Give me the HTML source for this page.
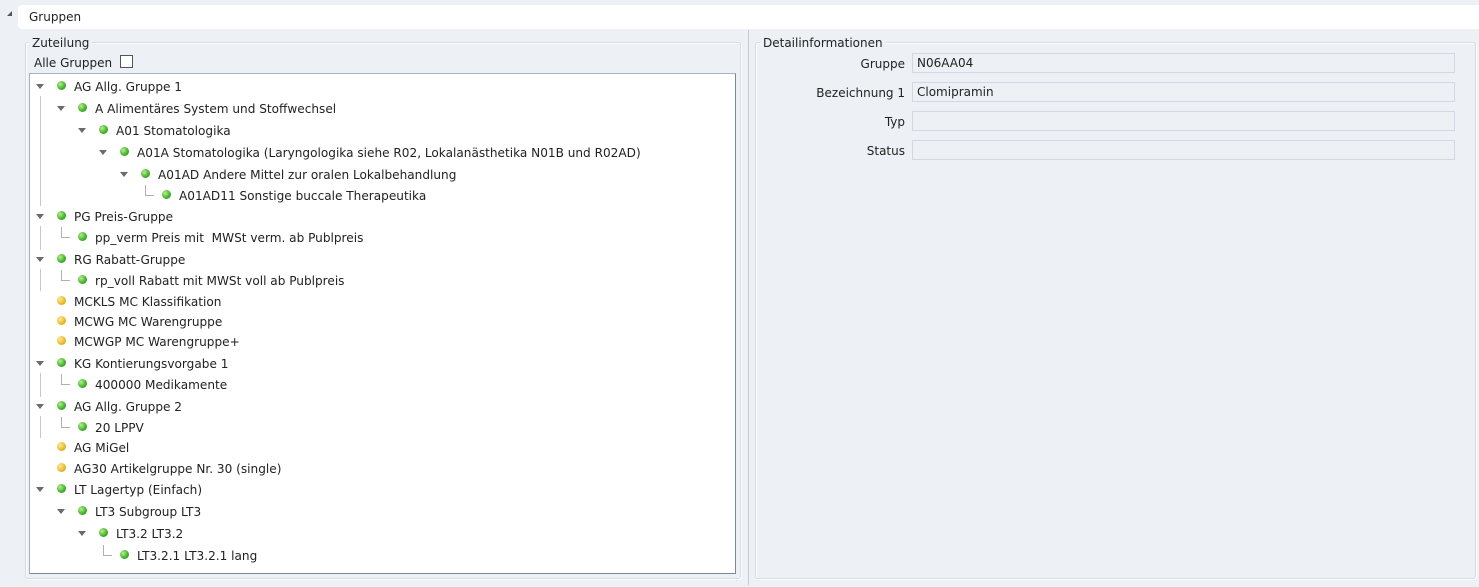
<!DOCTYPE html>
<html><head><meta charset="utf-8"><style>
*{box-sizing:border-box;margin:0;padding:0}
body{width:1479px;height:587px;background:#edf0f5;font-family:"DejaVu Sans","Liberation Sans",sans-serif;font-size:11.5px;color:#222;position:relative;overflow:hidden}
.abs{position:absolute}
.hdr{left:18px;top:5px;width:1461px;height:24px;background:#fff;border-radius:4px 0 0 4px}
.fs{border:1px solid #d5dbe4;box-shadow:inset 1px 1px 0 #fff,1px 1px 0 #fff;border-radius:3px}
.leg{background:#edf0f5;padding:0 3px;font-size:12px;line-height:14px}
.tree{left:29px;top:73px;width:707px;height:501px;background:#fff;border:1px solid #a9b3c1;border-right-color:#7c889a;border-bottom-color:#7c889a}
.r{position:absolute;white-space:nowrap;line-height:16px;font-size:12.1px;margin-top:1px}
.ar{position:absolute;width:0;height:0;border-left:4px solid transparent;border-right:4px solid transparent;border-top:5px solid #6b6b6b}
.d{position:absolute;width:9px;height:9px;border-radius:50%}
.g{background:radial-gradient(circle at 35% 35%,#b6f08a,#3fae2a 60%,#2e8a1c)}
.y{background:radial-gradient(circle at 35% 35%,#ffe9a0,#e8b923 60%,#c09010)}
.vl{position:absolute;width:1px;background:#c8c8c8}
.el{position:absolute;width:9px;height:11px;border-left:1px solid #b0b0b0;border-bottom:1px solid #b0b0b0}
.lab{position:absolute;font-size:12px;text-align:right;width:120px;line-height:16px;margin-top:1px}
.in{position:absolute;left:912px;width:543px;height:20px;background:#edf0f5;border:1px solid #cfd8e4;padding:2px 4px;font-size:12px;line-height:14px}
</style></head><body>
<div class="abs" style="left:7px;top:11px;width:0;height:0;border-left:5px solid transparent;border-bottom:5px solid #555"></div>
<div class="abs hdr"></div>
<div class="abs" style="left:29px;top:9px;font-size:12px;line-height:16px">Gruppen</div>

<div class="abs fs" style="left:25px;top:42px;width:716px;height:537px"></div>
<div class="abs leg" style="left:29px;top:36px">Zuteilung</div>
<div class="abs" style="left:34px;top:55px;font-size:12px;line-height:16px">Alle Gruppen</div>
<div class="abs" style="left:120px;top:55px;width:13px;height:13px;border:1px solid #555;background:#fff"></div>

<div class="abs" style="left:748px;top:30px;width:1px;height:555px;background:#c5cdd9"></div>

<div class="abs fs" style="left:755px;top:42px;width:721px;height:537px"></div>
<div class="abs leg" style="left:760px;top:36px">Detailinformationen</div>
<div class="lab" style="left:785px;top:55px">Gruppe</div>
<div class="in" style="top:53px">N06AA04</div>
<div class="lab" style="left:785px;top:84px">Bezeichnung 1</div>
<div class="in" style="top:82px">Clomipramin</div>
<div class="lab" style="left:785px;top:113px">Typ</div>
<div class="in" style="top:111px"></div>
<div class="lab" style="left:785px;top:142px">Status</div>
<div class="in" style="top:140px"></div>

<div class="abs tree"></div>
<div class="vl" style="left:40px;top:96px;height:110px"></div>
<div class="vl" style="left:40px;top:226px;height:24px"></div>
<div class="vl" style="left:40px;top:269px;height:22px"></div>
<div class="vl" style="left:40px;top:373px;height:24px"></div>
<div class="vl" style="left:40px;top:416px;height:22px"></div>

<div class="ar" style="left:36px;top:84px"></div><div class="d g" style="left:57px;top:81px"></div><div class="r" style="left:74px;top:78px">AG Allg. Gruppe 1</div>
<div class="ar" style="left:57px;top:106px"></div><div class="d g" style="left:78px;top:103px"></div><div class="r" style="left:95px;top:100px">A Alimentäres System und Stoffwechsel</div>
<div class="ar" style="left:78px;top:128px"></div><div class="d g" style="left:99px;top:125px"></div><div class="r" style="left:116px;top:122px">A01 Stomatologika</div>
<div class="ar" style="left:99px;top:150px"></div><div class="d g" style="left:120px;top:147px"></div><div class="r" style="left:137px;top:144px">A01A Stomatologika (Laryngologika siehe R02, Lokalanästhetika N01B und R02AD)</div>
<div class="ar" style="left:120px;top:172px"></div><div class="d g" style="left:141px;top:169px"></div><div class="r" style="left:158px;top:166px">A01AD Andere Mittel zur oralen Lokalbehandlung</div>
<div class="el" style="left:145px;top:185px"></div><div class="d g" style="left:162px;top:190px"></div><div class="r" style="left:179px;top:187px">A01AD11 Sonstige buccale Therapeutika</div>
<div class="ar" style="left:36px;top:214px"></div><div class="d g" style="left:57px;top:211px"></div><div class="r" style="left:74px;top:208px">PG Preis-Gruppe</div>
<div class="el" style="left:61px;top:227px"></div><div class="d g" style="left:78px;top:232px"></div><div class="r" style="left:95px;top:229px">pp_verm Preis mit&nbsp; MWSt verm. ab Publpreis</div>
<div class="ar" style="left:36px;top:257px"></div><div class="d g" style="left:57px;top:254px"></div><div class="r" style="left:74px;top:251px">RG Rabatt-Gruppe</div>
<div class="el" style="left:61px;top:270px"></div><div class="d g" style="left:78px;top:275px"></div><div class="r" style="left:95px;top:272px">rp_voll Rabatt mit MWSt voll ab Publpreis</div>
<div class="d y" style="left:57px;top:296px"></div><div class="r" style="left:74px;top:293px">MCKLS MC Klassifikation</div>
<div class="d y" style="left:57px;top:316px"></div><div class="r" style="left:74px;top:313px">MCWG MC Warengruppe</div>
<div class="d y" style="left:57px;top:336px"></div><div class="r" style="left:74px;top:333px">MCWGP MC Warengruppe+</div>
<div class="ar" style="left:36px;top:361px"></div><div class="d g" style="left:57px;top:358px"></div><div class="r" style="left:74px;top:355px">KG Kontierungsvorgabe 1</div>
<div class="el" style="left:61px;top:374px"></div><div class="d g" style="left:78px;top:379px"></div><div class="r" style="left:95px;top:376px">400000 Medikamente</div>
<div class="ar" style="left:36px;top:404px"></div><div class="d g" style="left:57px;top:401px"></div><div class="r" style="left:74px;top:398px">AG Allg. Gruppe 2</div>
<div class="el" style="left:61px;top:417px"></div><div class="d g" style="left:78px;top:422px"></div><div class="r" style="left:95px;top:419px">20 LPPV</div>
<div class="d y" style="left:57px;top:442px"></div><div class="r" style="left:74px;top:439px">AG MiGel</div>
<div class="d y" style="left:57px;top:463px"></div><div class="r" style="left:74px;top:460px">AG30 Artikelgruppe Nr. 30 (single)</div>
<div class="ar" style="left:36px;top:487px"></div><div class="d g" style="left:57px;top:484px"></div><div class="r" style="left:74px;top:481px">LT Lagertyp (Einfach)</div>
<div class="ar" style="left:57px;top:509px"></div><div class="d g" style="left:78px;top:506px"></div><div class="r" style="left:95px;top:503px">LT3 Subgroup LT3</div>
<div class="ar" style="left:78px;top:531px"></div><div class="d g" style="left:99px;top:528px"></div><div class="r" style="left:116px;top:525px">LT3.2 LT3.2</div>
<div class="el" style="left:103px;top:545px"></div><div class="d g" style="left:120px;top:550px"></div><div class="r" style="left:137px;top:547px">LT3.2.1 LT3.2.1 lang</div>
</body></html>
